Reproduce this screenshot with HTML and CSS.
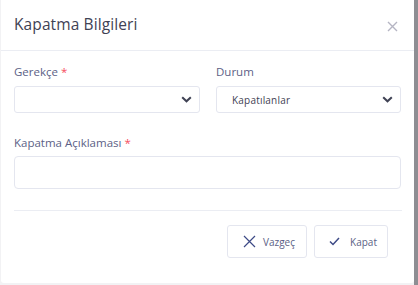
FILE: index.html
```html
<!DOCTYPE html>
<html lang="tr">
<head>
<meta charset="utf-8">
<link rel="stylesheet" href="styles.css">
</head>
<body>
<div class="page">
  <div class="modal">
    <div class="modal-header">
      <h2 class="title">Kapatma Bilgileri</h2>
      <button class="close" aria-label="Kapat">
        <svg width="11" height="11" viewBox="0 0 11 11"><path d="M1 1L10 10M10 1L1 10" stroke="#b5b5c3" stroke-width="1.4" fill="none"/></svg>
      </button>
    </div>
    <div class="modal-body">
      <div class="row">
        <div class="field">
          <label class="label">Gerekçe <span class="req">*</span></label>
          <div class="select">
            <span class="select-text"></span>
            <svg class="chev" width="11" height="7" viewBox="0 0 11 7"><path d="M1.2 1.2L5.5 5.3L9.8 1.2" stroke="#3f4254" stroke-width="2" fill="none"/></svg>
          </div>
        </div>
        <div class="field">
          <label class="label">Durum</label>
          <div class="select">
            <span class="select-text">Kapatılanlar</span>
            <svg class="chev" width="11" height="7" viewBox="0 0 11 7"><path d="M1.2 1.2L5.5 5.3L9.8 1.2" stroke="#3f4254" stroke-width="2" fill="none"/></svg>
          </div>
        </div>
      </div>
      <div class="field wide">
        <label class="label">Kapatma Açıklaması <span class="req">*</span></label>
        <div class="input"></div>
      </div>
      <div class="divider"></div>
      <div class="actions">
        <button class="btn">
          <svg width="13" height="13" viewBox="0 0 13 13"><path d="M1 1L12 12M12 1L1 12" stroke="#3d4a86" stroke-width="1.2" fill="none"/></svg>
          <span>Vazgeç</span>
        </button>
        <button class="btn btn-ok">
          <svg width="11" height="9" viewBox="0 0 11 9"><path d="M1 4.5L4 7.5L10 1" stroke="#3d4a86" stroke-width="1.5" fill="none"/></svg>
          <span>Kapat</span>
        </button>
      </div>
    </div>
  </div>
</div>
</body>
</html>
```
FILE: styles.css
```css
* { box-sizing: border-box; }
html, body { margin: 0; padding: 0; }
body {
  width: 418px;
  height: 285px;
  overflow: hidden;
  background: #8e8e93;
  font-family: "Open Sans", "Noto Sans", sans-serif;
}
.page {
  width: 414px;
  height: 285px;
  padding-left: 1px;
  background: #f2f2f4;
}
.modal {
  width: 413px;
  height: 283px;
  background: #fff;
  border-radius: 0 0 3px 3px;
}
.modal-header {
  height: 51px;
  display: flex;
  align-items: center;
  justify-content: space-between;
  padding: 0 16px 2px 13px;
  border-bottom: 1px solid #ebedf3;
}
.title {
  margin: 0;
  font-size: 15.5px;
  font-weight: 400;
  color: #3f4254;
  letter-spacing: 0.1px;
}
.close {
  border: 0;
  background: none;
  padding: 0;
  display: flex;
  margin-top: 4px;
}
.modal-body {
  padding: 13px 12px 0 13px;
}
.row {
  display: grid;
  grid-template-columns: 186px 185px;
  column-gap: 16px;
}
.field { display: flex; flex-direction: column; }
.label {
  font-size: 11.5px;
  color: #5c5f86;
  height: 22px;
  line-height: 16px;
}
.req { color: #f64e60; }
.select {
  height: 27px;
  border: 1px solid #e4e6ef;
  border-radius: 3px;
  display: flex;
  align-items: center;
  justify-content: space-between;
  padding: 0 7px 0 15px;
}
.select-text {
  font-size: 10px;
  color: #3f4254;
  letter-spacing: 0.2px;
}
.wide { margin-top: 22px; }
.wide .label { height: 21px; }
.input {
  width: 387px;
  height: 33px;
  border: 1px solid #e4e6ef;
  border-radius: 4px;
}
.divider {
  margin-top: 21px;
  width: 388px;
  height: 1px;
  background: #ebedf3;
}
.actions {
  display: flex;
  justify-content: flex-end;
  gap: 7px;
  margin-top: 14px;
  padding-right: 14px;
}
.btn {
  height: 33px;
  width: 80px;
  border: 1px solid #e4e6ef;
  border-radius: 3px;
  background: #fff;
  display: flex;
  align-items: center;
  justify-content: center;
  gap: 7px;
  font-family: "Open Sans", "Noto Sans", sans-serif;
  font-size: 10px;
  color: #5c5f86;
  padding: 0 0 0 4px;
}
.btn-ok { width: 74px; gap: 10px; }
```
